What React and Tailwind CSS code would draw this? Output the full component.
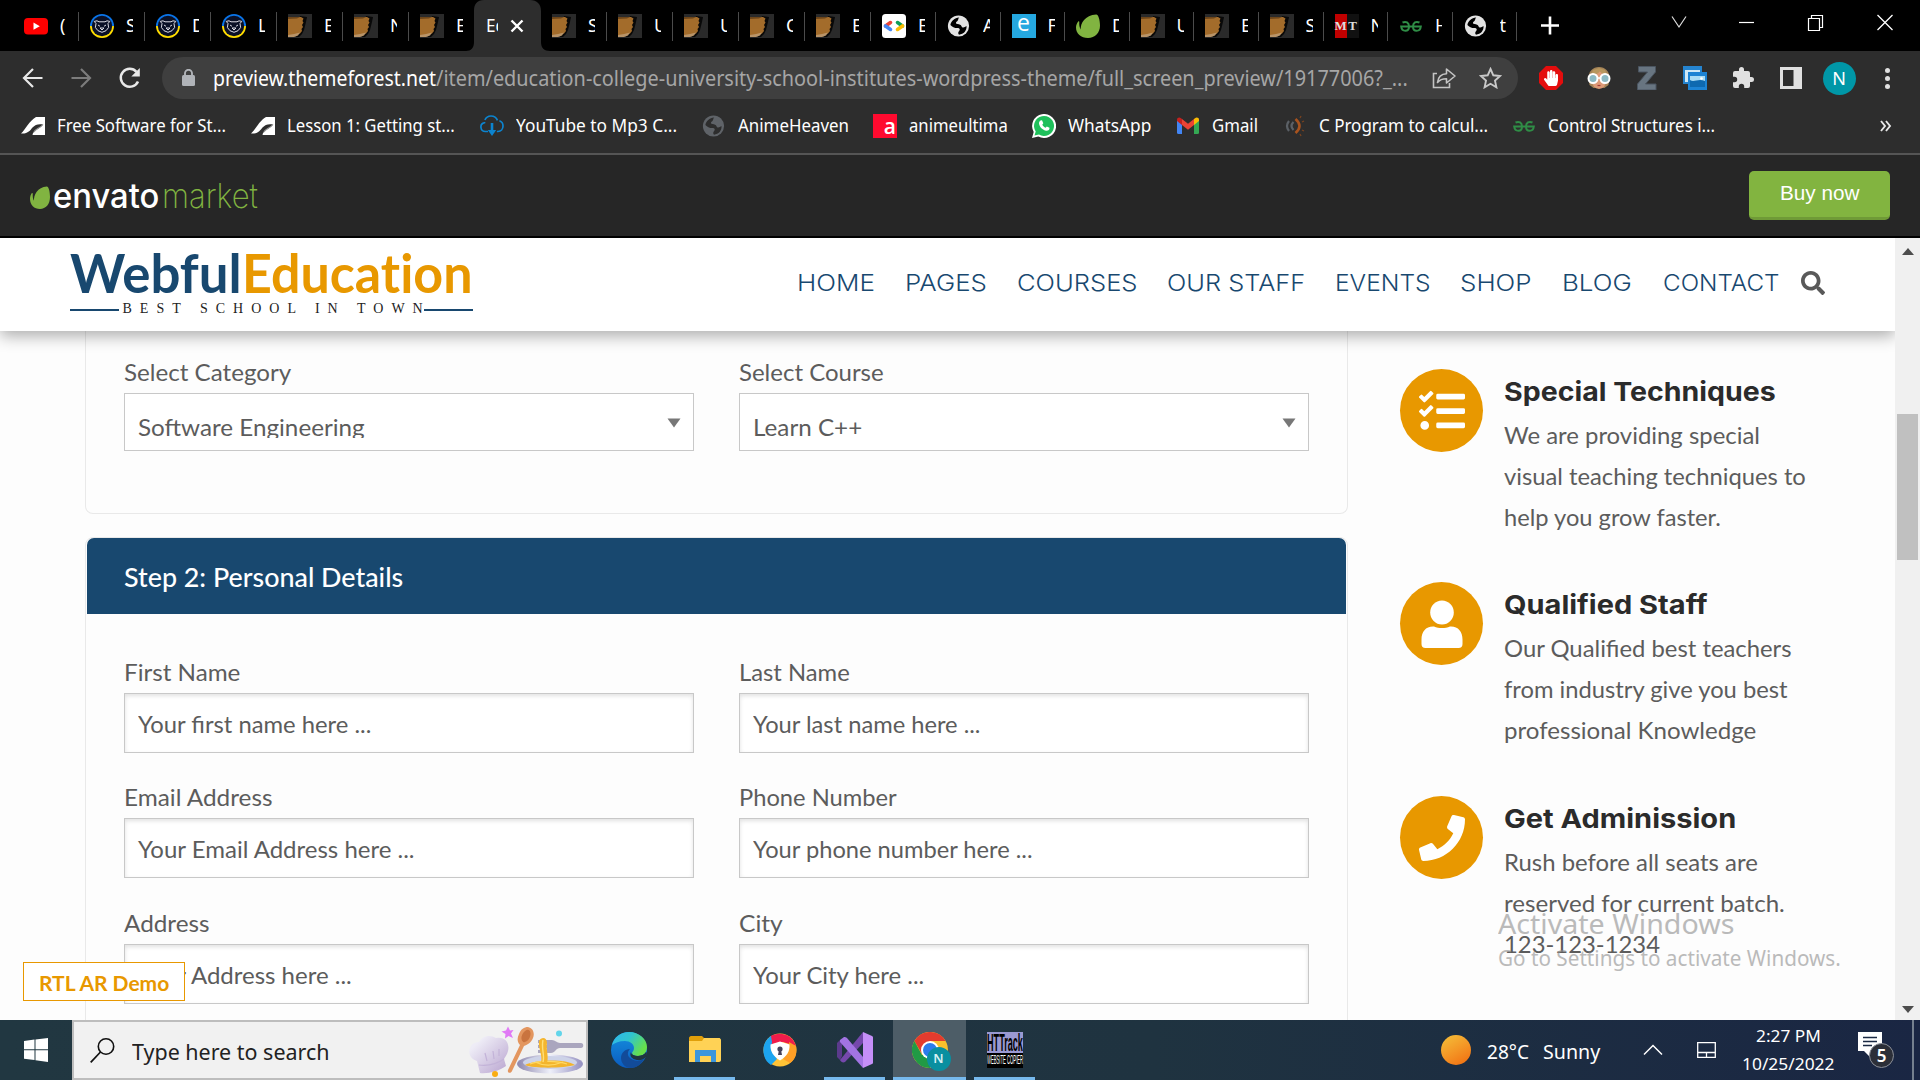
import React, { useLayoutEffect, useRef, useState } from "react";
import { FaSearch, FaTasks, FaPhone, FaHandPaper } from "react-icons/fa";

// Single line of text stretched horizontally to an exact width.
function Fit({ w, className = "", children }) {
  const ref = useRef(null);
  const [k, setK] = useState(1);
  useLayoutEffect(() => {
    setK(w / ref.current.offsetWidth);
  }, [w]);
  return (
    <span className={"inline-block shrink-0 whitespace-pre " + className} style={{ width: w }}>
      <span ref={ref} className="inline-block origin-left" style={{ transform: `scaleX(${k})` }}>
        {children}
      </span>
    </span>
  );
}

/* ---------- favicons ---------- */
const YouTube = () => (
  <svg width="24" height="24" viewBox="0 0 24 24"><rect y="4" width="24" height="16.5" rx="4" fill="#f00" /><path d="M9.5 8.6v7.2l6.3-3.6z" fill="#fff" /></svg>
);
const Bear = () => (
  <svg width="24" height="24" viewBox="0 0 24 24">
    <path d="M0 12a12 12 0 0 1 24 0z" fill="#0a74e8" /><path d="M0 12a12 12 0 0 0 24 0z" fill="#ffdd00" />
    <circle cx="12" cy="12" r="10.2" fill="#0a1026" />
    <path d="M6 9.5 4.2 7.4 7 6.8l2 1h6l2-1 2.8.6L18 9.5l.6 4-2.6 3.2-4 1.6-4-1.6-2.6-3.2z M8 11l2 1.3M16 11l-2 1.3M10 14h4l-2 2z" fill="none" stroke="#dcdce4" strokeWidth="1" />
  </svg>
);
const Fist = () => (
  <svg width="24" height="24" viewBox="0 0 24 24">
    <rect width="24" height="24" fill="#2a2a2a" />
    <path d="M12 2l7 1-1 5-1 4-1 4-2 4-3 3H8z" fill="#080808" />
    <path d="M0 3h13l2.500 1.500L14.500 7l1 1.500-1.500 2.500 1 2-1.500 2 .5 2-2 2.500-3 1-4 2H0z" fill="#a36c2b" />
    <path d="M0 21l6-1 6-1.500-2 3-4 1.500H0z" fill="#b99468" />
    <path d="M0 3h12l-3 1.500L0 5z" fill="#6d4519" />
  </svg>
);
const Dev = () => (
  <svg width="24" height="24" viewBox="0 0 24 24"><rect width="24" height="24" rx="3.5" fill="#fff" />
    <g fill="none" strokeWidth="3.6" strokeLinecap="round"><path d="M3.5 12 8.5 8.6" stroke="#ea4335" /><path d="M3.5 12l5 3.4" stroke="#4285f4" /><path d="M20.5 12l-5-3.4" stroke="#0f9d58" /><path d="M20.5 12l-5 3.4" stroke="#fbbc04" /></g>
  </svg>
);
const Globe = ({ fill = "#e3e3e3", hole = "#000" }) => (
  <svg width="24" height="24" viewBox="0 0 24 24"><circle cx="11.5" cy="12" r="10.6" fill={fill} />
    <path d="M12.200 3.600c-1.600 1.300-.4 2.500-2 3.600C8.400 8.300 8.600 9.800 10.500 10c2 .3 3.500.8 4 2.300.6 1.800 3 1.500 5-.2.500 4.500-2.800 8.300-7.500 8.600-1.300-1.300-.8-2.700.2-3.700 1.300-1.500.2-2.900-1.600-2.900-3.400 0-5.400-1.100-7.200-3.100C4 7.500 7.500 3.700 12.200 3.600z" fill={hole} />
  </svg>
);
const EIcon = () => (
  <span className="flex h-6 w-6 items-center justify-center bg-[#25a8e0] font-['Open_Sans'] text-[23px] leading-none text-white"><span className="-mt-1.5">e</span></span>
);
const Leaf = ({ w = 24, h = 24 }) => (
  <svg width={w} height={h} viewBox="0 0 24 24" preserveAspectRatio="none"><path d="M20.200.4C22 .2 24 5 24 11.500 24 19 19 24 12 24 5 24 0 19.500 0 13.500 0 11 1 9 2.200 7.400c.6-.5 1.200-.1 1.100.7-.2 2.700.1 5.400 1.500 7.300C4.200 9.500 9 1 20.200.4z" fill="#81b441" /></svg>
);
const MT = () => (
  <span className="flex h-6 w-6 bg-[#111] font-['Liberation_Serif'] text-[13px] leading-6 font-bold text-[#ddd]"><span className="w-3 bg-[#c00000] text-center">M</span><span className="w-3 text-center">T</span></span>
);
const Geeks = () => (
  <svg width="24" height="24" viewBox="0 0 24 24" fill="none" stroke="#2f8d46" strokeWidth="2">
    <path d="M3.500 8.500C7 7 10 8.500 10 12.500c0 3-1.500 4.300-3.600 4.300-2.200 0-3.900-1.300-4.200-4.300h19.600c-.3 3-2 4.300-4.200 4.300S14 15.500 14 12.500c0-4 3-5.500 6.500-4" />
  </svg>
);

const TABS = [
  [YouTube, "(", 66], [Bear, "S", 66], [Bear, "D", 66], [Bear, "L", 66], [Fist, "E", 66], [Fist, "N", 66], [Fist, "E", 66],
  null,
  [Fist, "S", 66], [Fist, "U", 66], [Fist, "U", 66], [Fist, "C", 66], [Fist, "E", 66], [Dev, "E", 65], [Globe, "A", 64.5],
  [EIcon, "F", 64.5], [Leaf, "D", 64.5], [Fist, "U", 64.5], [Fist, "E", 64.5], [Fist, "S", 65], [MT, "N", 64.5], [Geeks, "H", 64.5], [Globe, "t", 64.5],
];

function TabStrip() {
  return (
    <div className="flex h-[51px] bg-black pl-[13px] font-['Noto_Sans'] text-[18px] text-white">
      {TABS.map((t, i) => {
        if (!t)
          return (
            <div key={i} className="relative flex h-full w-[66px] items-center">
              <div className="absolute top-0 -left-[9px] h-full w-[84px]">
                <svg width="84" height="51" viewBox="0 0 84 51"><path d="M0 51c5 0 8-3 8-9V11C8 4 11 0 18 0h46c7 0 11 4 11 11v31c0 6 3 9 9 9z" fill="#2d2d2d" /></svg>
              </div>
              <span className="relative ml-[11px] w-3 overflow-hidden whitespace-nowrap"><Fit w={20}>Ed</Fit></span>
              <svg className="relative ml-3" width="14" height="14" viewBox="0 0 14 14"><path d="M1.500 1.500l11 11M12.500 1.500l-11 11" stroke="#fff" strokeWidth="2.400" /></svg>
            </div>
          );
        const [Icon, ch, w] = t;
        return (
          <div key={i} className="relative flex h-full shrink-0 items-center pl-[11px]" style={{ width: w }}>
            <Icon />
            <span className="ml-3 w-[7px] overflow-hidden whitespace-nowrap">{ch}</span>
            {i !== 6 && <span className="absolute top-3 right-0 h-[29px] w-px bg-[#4b4b4b]" />}
          </div>
        );
      })}
      <svg className="mt-4 ml-6 shrink-0" width="18" height="19" viewBox="0 0 18 19"><path d="M9 .5v18M0 9.500h18" stroke="#fff" strokeWidth="2.600" /></svg>
      <div className="ml-auto flex h-[43px] shrink-0 items-center">
        <svg width="68" height="20" viewBox="0 0 68 20"><path d="M8 4.500l7 10.500 7-10.500" fill="none" stroke="#ddd" strokeWidth="1.200" /></svg>
        <svg width="69" height="20" viewBox="0 0 69 20"><path d="M7 10.500h15" stroke="#fff" strokeWidth="1.200" /></svg>
        <svg width="69" height="20" viewBox="0 0 69 20"><path d="M7.500 6.500h11v12h-11zM10.500 6V3.500h11v12H19" fill="none" stroke="#fff" strokeWidth="1.200" /></svg>
        <svg width="50" height="20" viewBox="0 0 50 20"><path d="M7.500 3l15 15M22.500 3l-15 15" stroke="#fff" strokeWidth="1.300" /></svg>
      </div>
    </div>
  );
}

const Slot = ({ children }) => <div className="flex h-full w-12 shrink-0 items-center justify-center">{children}</div>;

function Toolbar() {
  return (
    <div className="flex h-[54px] items-center pl-[9px]">
      <Slot><svg width="22" height="22" viewBox="0 0 22 22"><path d="M20.500 11H2.500M11 2 2 11l9 9" fill="none" stroke="#e8e8e8" strokeWidth="2.200" /></svg></Slot>
      <Slot><svg width="22" height="22" viewBox="0 0 22 22"><path d="M1.500 11h18M11 2l9 9-9 9" fill="none" stroke="#7c7c7c" strokeWidth="2.200" /></svg></Slot>
      <Slot><svg className="ml-0.5" width="24" height="24" viewBox="0 0 24 24"><path d="M20 15.500A9 9 0 1 1 18.500 5.800" fill="none" stroke="#e8e8e8" strokeWidth="2.500" /><path d="M21.800 2v8.500h-8.500z" fill="#e8e8e8" /></svg></Slot>
      <div className="ml-[9px] flex h-[42px] w-[1356px] shrink-0 items-center rounded-full bg-[#3f3f3f] pl-[20px] font-['Noto_Sans'] text-[21px] leading-[42px]">
        <svg className="mr-[18px] mb-0.5" width="13" height="17" viewBox="0 0 13 17"><rect y="6" width="13" height="11" rx="1.5" fill="#b0b3b8" /><path d="M3 7V4.300a3.500 3.500 0 0 1 7 0V7" fill="none" stroke="#b0b3b8" strokeWidth="1.900" /></svg>
        <Fit w={223} className="text-white">preview.themeforest.net</Fit>
        <Fit w={972} className="text-[#a6a6a6]">/item/education-college-university-school-institutes-wordpress-theme/full_screen_preview/19177006?_...</Fit>
        <svg className="ml-6" width="25" height="22" viewBox="0 0 25 22"><path d="M5 6.500H1.500v14h16V16" fill="none" stroke="#c4c4c4" strokeWidth="1.600" /><path d="M5.500 15.500c.6-5.500 3.500-8.500 9-8.700V2l8.500 7-8.500 7v-4.300c-4 0-6.800 1-9 3.800z" fill="none" stroke="#c4c4c4" strokeWidth="1.600" strokeLinejoin="round" /></svg>
        <svg className="ml-[22px]" width="23" height="22" viewBox="0 0 23 22"><path d="M11.500 2l2.800 6.300 6.700.7-5 4.600 1.400 6.700-5.900-3.500-5.900 3.500L7 13.600 2 9l6.700-.7z" fill="none" stroke="#c9c9c9" strokeWidth="1.900" /></svg>
      </div>
      <div className="ml-[9px] flex h-full">
        <Slot><span className="relative flex h-6 w-6 items-center justify-center"><svg className="absolute inset-0" width="24" height="24" viewBox="0 0 24 24"><path d="M7 0h10l7 7v10l-7 7H7l-7-7V7z" fill="#e40d0d" /></svg><FaHandPaper className="relative" color="#fff" size={16} /></span></Slot>
        <Slot><svg width="24" height="24" viewBox="0 0 24 24"><path d="M1.500 12C1.500 5 6 1 12 1s10.500 4 10.500 11l-1 7-4 3h-11l-4-3z" fill="#a58458" /><ellipse cx="12" cy="14" rx="7.500" ry="9" fill="#dd9a78" /><path d="M4 9c4 0 7-1 9-4 2 3 4 4 7 4l-2-5-6-2-6 2z" fill="#b8975f" /><g fill="#8cb9c4" stroke="#fff" strokeWidth="2"><circle cx="6" cy="12.5" r="4.5" /><circle cx="18" cy="12.5" r="4.5" /></g><path d="M10.500 12h3" stroke="#fff" strokeWidth="1.500" /><path d="M10.500 19.500h3" stroke="#a43e3a" strokeWidth="1.200" /></svg></Slot>
        <Slot><svg width="20" height="24" viewBox="0 0 20 24"><path d="M1.500.5h17v5.500L8.500 18H19v6H.5v-6L10.500 6h-9z" fill="#687581" stroke="#4b5560" /></svg></Slot>
        <Slot><svg width="24" height="24" viewBox="0 0 24 24"><rect width="19" height="18" fill="#2584cf" /><path d="M2 4h15v12H2z" fill="#cfe8f6" /><rect x="5" y="6" width="19" height="18" fill="#1c83d4" /><path d="M7 10h15v11H7z" fill="#a9dcf5" /><path d="M7 14c4 3 8-2 15 1v6H7z" fill="#0e69b0" /><circle cx="18.5" cy="12.5" r="1.3" fill="#fff" /></svg></Slot>
        <Slot><svg width="24" height="24" viewBox="0 0 24 24"><path d="M20.500 11H19V7a2 2 0 0 0-2-2h-4V3.500a2.500 2.500 0 0 0-5 0V5H4a2 2 0 0 0-2 2v3.800h1.500a2.700 2.700 0 0 1 0 5.400H2V20a2 2 0 0 0 2 2h3.800v-1.500a2.700 2.700 0 0 1 5.400 0V22H17a2 2 0 0 0 2-2v-4h1.500a2.500 2.500 0 0 0 0-5z" fill="#e0e0e0" /></svg></Slot>
        <Slot><svg width="22" height="22" viewBox="0 0 22 22"><path d="M0 0h22v22H0zM3 3v16h10.500V3z" fill="#e0e0e0" fillRule="evenodd" /></svg></Slot>
        <Slot><span className="flex h-[33px] w-[33px] items-center justify-center rounded-full bg-[#0097a7] font-['Noto_Sans'] text-[18px] text-white">N</span></Slot>
        <Slot><span className="flex flex-col gap-[3px]"><i className="h-[5px] w-[5px] rounded-full bg-[#e0e0e0]" /><i className="h-[5px] w-[5px] rounded-full bg-[#e0e0e0]" /><i className="h-[5px] w-[5px] rounded-full bg-[#e0e0e0]" /></span></Slot>
      </div>
    </div>
  );
}

const Autodesk = () => (
  <svg width="24" height="24" viewBox="0 0 24 24"><path d="M0 19.500C5 15 8 7 15 3h9v18H11.500C12 16 19 15 22 10.500c-4-1-8 0-10.500 3C9 16.500 7 20 0 19.500z" fill="#fff" /><path d="M13 18c1-3 6-3.500 9-7.500" fill="none" stroke="#999" strokeWidth="1.200" /></svg>
);
const CloudDown = () => (
  <svg width="24" height="24" viewBox="0 0 24 24" fill="none" stroke="#0c84cf" strokeWidth="1.700"><path d="M8 17.500H5.500A4.500 4.500 0 0 1 4.500 8.600C4.500 4.500 7.500 2 11 2c3.200 0 5.500 1.700 6.500 4.500 3.500 0 5.500 2.500 5.500 5.500 0 3.200-2.200 5.500-5 5.500h-2" strokeDasharray="16 2" /><path d="M12 9v9" strokeWidth="2.600" /><path d="M7.800 16h8.400L12 22z" fill="#0c84cf" stroke="none" /></svg>
);
const AnimeU = () => <span className="flex h-6 w-6 items-end justify-end bg-[#ff0a2f] pr-px font-['Open_Sans'] text-[21px] leading-[24px] font-semibold text-white">a</span>;
const WhatsApp = () => (
  <span className="relative flex h-6 w-6 items-center justify-center">
    <svg className="absolute inset-0" width="24" height="24" viewBox="0 0 24 24"><path d="M0 24l1.700-6A12 12 0 1 1 6.300 22.500z" fill="#fff" /><path d="M2.500 21.500l1.200-4A10 10 0 1 1 7 20.600z" fill="#1fc05b" /></svg>
    <svg className="relative" width="14" height="14" viewBox="0 0 14 14"><path d="M3.500 1.500 5 1.300l1.300 3-1 1.400c.8 1.500 1.800 2.400 3.300 3l1.200-1.300 2.700 1.400c.2 2-1.300 3.200-3.200 3C5.500 11 2.500 8 2 4.500 2 3.200 2.600 2 3.500 1.500z" fill="#fff" /></svg>
  </span>
);
const Gmail = () => (
  <svg width="24" height="24" viewBox="0 0 24 24"><path d="M1 6v12.500A1.500 1.500 0 0 0 2.500 20H6V10z" fill="#4285f4" /><path d="M23 6v12.500a1.500 1.500 0 0 1-1.500 1.500H18V10z" fill="#34a853" /><path d="M18 5v6l5-4V6c0-2.500-2.500-3-4-1.800z" fill="#fbbc04" /><path d="M6 5l6 4.800L18 5v6l-6 4.700L6 11z" fill="#ea4335" /><path d="M6 5v6L1 7V6c0-2.500 2.500-3 4-1.800z" fill="#c5221f" /></svg>
);
const CProg = () => (
  <svg width="24" height="24" viewBox="0 0 24 24" fill="none"><path d="M6 7q-4 5 0 10M10.500 8q-4 4 0 8" stroke="#5b6066" strokeWidth="2.200" /><path d="M12.500 5q8 7 0 14" stroke="#a8531e" strokeWidth="2.600" /><path d="M17 4l1-2M19 8l2-1M19 16l2 1M17 20l1 2" stroke="#7a431f" strokeWidth="1.300" /></svg>
);
const DimGlobe = () => <Globe fill="#5f6368" hole="#2d2d2d" />;
const BOOKMARKS = [
  [Autodesk, "Free Software for St...", 169, 230], [Autodesk, "Lesson 1: Getting st...", 168, 229], [CloudDown, "YouTube to Mp3 C...", 161, 222],
  [DimGlobe, "AnimeHeaven", 111, 171], [AnimeU, "animeultima", 99, 159], [WhatsApp, "WhatsApp", 83, 144],
  [Gmail, "Gmail", 46, 107], [CProg, "C Program to calcul...", 169, 229], [Geeks, "Control Structures i...", 167, 368],
];

function BookmarkBar() {
  return (
    <div className="flex h-[50px] items-center border-b-2 border-[#555] pb-1.5 pl-[21px] font-['Noto_Sans'] text-[17.5px] text-white">
      {BOOKMARKS.map(([Icon, label, tw, w]) => (
        <div key={label} className="flex shrink-0 items-center gap-3" style={{ width: w }}>
          <Icon />
          <Fit w={tw} className="-mt-[2px]">{label}</Fit>
        </div>
      ))}
      <svg width="12" height="12" viewBox="0 0 12 12"><path d="M1 1l4 5-4 5M6 1l4 5-4 5" fill="none" stroke="#e8e8e8" strokeWidth="1.900" /></svg>
    </div>
  );
}

function EnvatoBar() {
  return (
    <div className="flex h-[83px] items-start justify-between border-b-2 border-black bg-[#262626] pr-[30px] pl-[30px]">
      <div className="mt-[21px] flex items-center font-['Inter'] text-[34px] leading-[40px]">
        <span className="mt-[3px]"><Leaf w={20} h={23} /></span>
        <Fit w={106} className="ml-[3px] font-medium text-white">envato</Fit>
        <Fit w={96} className="ml-[3px] font-extralight text-[#81b441]">market</Fit>
      </div>
      <button className="mt-4 flex h-[49px] w-[141px] items-center justify-center rounded-[5px] border-b-[3px] border-[#6f9a37] bg-[#82b440] font-['Liberation_Sans'] text-[21px] text-white">
        <Fit w={80} className="-mt-0.5">Buy now</Fit>
      </button>
    </div>
  );
}

const NAV = [["HOME", 78, 30], ["PAGES", 82, 30], ["COURSES", 120, 30], ["OUR STAFF", 138, 30], ["EVENTS", 95, 30], ["SHOP", 71, 31], ["BLOG", 70, 31], ["CONTACT", 117, 21]];

function SiteHeader() {
  return (
    <header className="relative z-10 flex h-[93px] w-[1895px] items-start bg-white pl-[70px] shadow-[0_5px_15px_rgba(0,0,0,0.32)]">
      <div className="mt-[7px] flex w-[403px] flex-col">
        <div className="flex h-[56px] font-['Lato'] text-[54px] leading-[56px] font-bold [font-variant-ligatures:none]">
          <Fit w={172} className="text-[#18486f]">Webful</Fit>
          <Fit w={231} className="text-[#e89800]">Education</Fit>
        </div>
        <div className="flex h-4 items-center justify-between font-['Liberation_Serif'] text-[14px] leading-4 text-[#222]">
          <span className="mt-px h-[2px] w-[49px] bg-[#18486f]" />
          <Fit w={308} className="ml-0.5 tracking-[8px]">BEST SCHOOL IN TOWN</Fit>
          <span className="mt-px -ml-2 h-[2px] w-[49px] bg-[#18486f]" />
        </div>
      </div>
      <nav className="mt-[29px] ml-[324px] flex items-center font-['Inter'] text-[23px] leading-8 font-light text-[#18486f]">
        {NAV.map(([t, w, g]) => (
          <a key={t} className="shrink-0" style={{ marginRight: g }}><Fit w={w}>{t}</Fit></a>
        ))}
        <FaSearch size={24} color="#595959" />
      </nav>
    </header>
  );
}

const FIELD = "flex w-[570px] border border-[#c8c8c8] bg-white pl-[13px]";
function Field({ label, w, ph, pw, className = "" }) {
  return (
    <div className={"flex flex-col " + className}>
      <Fit w={w} className="h-[42px] leading-[42px]">{label}</Fit>
      <div className={FIELD + " h-[60px] items-center pt-0.5 shadow-[inset_0_2px_4px_rgba(0,0,0,0.12)]"}><Fit w={pw} className="leading-[42px]">{ph}</Fit></div>
    </div>
  );
}
function Select({ label, w, value, vw }) {
  return (
    <div className="flex flex-col">
      <Fit w={w} className="h-[42px] leading-[41px]">{label}</Fit>
      <div className={FIELD + " h-[58px] justify-between pr-[12px]"}>
        <span className="mt-[14px] h-[30px] overflow-hidden"><Fit w={vw} className="leading-[37px]">{value}</Fit></span>
        <svg className="mt-6" width="14" height="10" viewBox="0 0 14 10"><path d="M.5.5h13L7 9.500z" fill="#777" /></svg>
      </div>
    </div>
  );
}

function EnrollForm() {
  return (
    <div className="ml-[85px] w-[1263px] shrink-0 text-[#5c5c5c]">
      <section className="h-[183px] rounded-b-lg border border-t-0 border-[#e9e9e9] pt-[20px] pl-[38px]">
        <div className="flex gap-[45px]">
          <Select label="Select Category" w={167} value="Software Engineering" vw={227} />
          <Select label="Select Course" w={145} value="Learn C++" vw={109} />
        </div>
      </section>
      <section className="mt-[23px] h-[600px] rounded-t-lg border border-[#e9e9e9]">
        <h2 className="mx-px flex h-[76px] items-center rounded-t-[7px] bg-[#18486f] pt-0.5 pl-[37px] text-[26px] font-medium text-white"><Fit w={279}>Step 2: Personal Details</Fit></h2>
        <div className="grid grid-cols-[570px_570px] gap-x-[45px] pt-[37px] pl-[38px]">
          <Field label="First Name" w={116} ph="Your first name here ..." pw={233} />
          <Field label="Last Name" w={111} ph="Your last name here ..." pw={227} />
          <Field className="mt-[23px]" label="Email Address" w={149} ph="Your Email Address here ..." pw={277} />
          <Field className="mt-[23px]" label="Phone Number" w={158} ph="Your phone number here ..." pw={280} />
          <Field className="mt-6" label="Address" w={86} ph="Your Address here ..." pw={214} />
          <Field className="mt-6" label="City" w={44} ph="Your City here ..." pw={171} />
        </div>
      </section>
    </div>
  );
}

const Person = () => (
  <svg width="42" height="48" viewBox="0 0 42 48" fill="#fff"><ellipse cx="21" cy="12.5" rx="11.8" ry="12" /><path d="M13 26.500c5 2 11 2 16 0 8-.5 12.500 5 12.500 13V44a4 4 0 0 1-4 4h-33a4 4 0 0 1-4-4v-4.500c0-8 4.500-13.500 12.500-13z" /></svg>
);
const INFO = [
  [<FaTasks size={46} />, "Special Techniques", 272, 213, [["We are providing special", 256], ["visual teaching techniques to", 302], ["help you grow faster.", 217]]],
  [<Person />, "Qualified Staff", 204, 214, [["Our Qualified best teachers", 288], ["from industry give you best", 284], ["professional Knowledge", 252]]],
  [<FaPhone size={46} />, "Get Adminission", 232, 213, [["Rush before all seats are", 254], ["reserved for current batch.", 281], ["123-123-1234", 156]]],
];

function InfoList() {
  return (
    <aside className="ml-[52px] flex flex-col pt-[38px]">
      {INFO.map(([icon, title, tw, h, lines]) => (
        <div key={title} className="flex gap-[21px]" style={{ height: h }}>
          <span className="flex h-[83px] w-[83px] shrink-0 items-center justify-center rounded-full bg-[#e89800] text-white">{icon}</span>
          <div className="flex flex-col text-[#5c5c5c]">
            <Fit w={tw} className="mt-1 mb-1 h-[37px] font-['Inter'] text-[26px] leading-[37px] font-bold text-[#2b2b2b]">{title}</Fit>
            {lines.map(([t, w]) => <Fit key={t} w={w} className="h-[41px] leading-[41px]">{t}</Fit>)}
          </div>
        </div>
      ))}
    </aside>
  );
}

/* ---------- taskbar ---------- */
const Cooking = () => (
  <svg width="118" height="54" viewBox="0 0 118 54">
    <defs>
      <linearGradient id="hat" x1="0" y1="0" x2="1" y2="1"><stop offset=".2" stopColor="#eeecf6" /><stop offset="1" stopColor="#b8a3cf" /></linearGradient>
      <linearGradient id="plate" x1="0" y1="0" x2="1" y2="0"><stop offset="0" stopColor="#8c86ad" /><stop offset=".5" stopColor="#eef0fa" /><stop offset="1" stopColor="#938fc0" /></linearGradient>
    </defs>
    <path d="M9 37C2 35-1 28 3 22c2-3 5-4 8-4 3-6 11-8 17-4 9-2 14 5 12 13-1 4-3 6-4 8l2 7c-7 5-18 8-26 7z" fill="url(#hat)" />
    <path d="M11 41c9 1 18-1 25-6M17 29l2 8M25 27l1 8M31 25l0 7" fill="none" stroke="#c3b3d8" strokeWidth="1.200" />
    <path d="M40 2.500l2 4 3.500-.5-2.500 3.500 2 4.500-4.500-2-3.500 2.500.5-4.500-4-2.500 4.500-1z" fill="#e079f5" />
    <path d="M60 3c5 1 7 6 5 11-2 5-6 7-9 8L44 47c-1 3-5 2-4-1l12-25c-3-3-3-7-1-11 2-5 5-7 9-7z" fill="#e3965f" />
    <ellipse cx="58" cy="12" rx="4" ry="6.5" transform="rotate(25 58 12)" fill="#c9743f" />
    <ellipse cx="82" cy="40" rx="33" ry="9.5" fill="url(#plate)" /><ellipse cx="82" cy="38.5" rx="27" ry="6.5" fill="#cdd3e8" />
    <path d="M57 41c8-5 40-7 50 0-10 3-40 4-50 0z" fill="#f3b42c" />
    <path d="M62 40c9-4 28-3 37 0M67 38c8 4 18 4 28 0" fill="none" stroke="#ffd862" strokeWidth="1.300" />
    <path d="M70 16h14c3 0 5 3 8 3h21c3 0 3 5 0 5H92c-4 0-5 5-9 5H70v-3h9v-2H70v-3h9v-2h-9z" fill="#aaa6be" />
    <path d="M71 17c3-5 8-3 8 2-1 8 2 13 0 20h-6c2-8-3-14-2-22z" fill="#f5b62e" /><path d="M75 16c-2 9 2 15 0 22" fill="none" stroke="#ffe07a" strokeWidth="1.400" />
    <circle cx="91" cy="9.5" r="3" fill="#62d5ea" /><circle cx="27" cy="50" r="3" fill="#f9ad12" />
  </svg>
);
const Edge = () => (
  <svg width="36" height="36" viewBox="0 0 36 36">
    <defs>
      <linearGradient id="e1" x1="0" y1="0" x2="1" y2=".5"><stop offset="0" stopColor="#2fb5ee" /><stop offset=".5" stopColor="#30c4cf" /><stop offset="1" stopColor="#67e04a" /></linearGradient>
      <linearGradient id="e2" x1="0" y1="0" x2="0" y2="1"><stop offset="0" stopColor="#1590df" /><stop offset="1" stopColor="#0b5cc0" /></linearGradient>
    </defs>
    <circle cx="18" cy="18" r="18" fill="url(#e2)" />
    <path d="M1 13C3 5 10 0 18 0c10 0 18 7 18 15 0 6-4 9-9 9-4 0-6-1-6-3 0-1 2-2 2-5 0-4-4-7-9-7-6 0-10 2-13 4z" fill="url(#e1)" />
    <path d="M33 27c-5 3-12 2-15-2-2-3-1-6 1-8-5 0-9 4-9 9 0 5 4 10 10 10 5 0 10-3 13-9z" fill="#124b99" />
    <path d="M35 25c-3 3-6 3.500-9 3-5-1-8-4-6-8 0 2 2 4 7 4 3 0 6-1 9-4z" fill="#203640" />
    <path d="M35 20c-2 3-5 4-8 4-4 0-6-1-6-3 0 5 8 7 15 3z" fill="#203640" />
  </svg>
);
const Explorer = () => (
  <svg width="32" height="27" viewBox="0 0 32 27"><path d="M0 2c0-1 1-2 2-2h11l2 2h16v6H0z" fill="#e09f0a" /><path d="M0 5h13l2-3h15c1 0 2 1 2 2v20c0 1-1 2-2 2H0z" fill="#ffd255" /><path d="M6 14h21v12h-5v-6H11v6H6z" fill="#3c96dc" /></svg>
);
const SecureBrowser = () => (
  <svg width="34" height="34" viewBox="0 0 34 34">
    <circle cx="17" cy="17" r="16.5" fill="#ffc336" /><path d="M8 3C14-1 29-1 33 13L20 9 5 12z" fill="#f01c4b" /><path d="M8 3C2 7-1 14 1 22c1 5 4 8 7 10l6-6-6-9 1-8z" fill="#1ca4ef" /><path d="M33 13c1 7 0 13-6 17l-7-4 6-8V9z" fill="#ff9f26" />
    <path d="M17 8.500l9.500 3c.5 7-3 12-9.500 16-6.500-4-10-9-9.500-16z" fill="#fff" /><circle cx="17" cy="16" r="2.6" fill="#45425a" /><path d="M16 17h2l1 5h-4z" fill="#45425a" />
  </svg>
);
const VisualStudio = () => (
  <svg width="36" height="36" viewBox="0 0 36 36"><path d="M0 11l3-3 2 4v12l-2 4-3-3z" fill="#5b3a8c" /><path d="M3 28 26 0v11L8 30c-2 1-4 0-5-2z" fill="#7548ac" /><path d="M3 8l4-3c1 0 2 0 3 1l16 19v11L3 10z" fill="#a274e3" /><path d="M26 0l9 4c.7.300 1 1 1 1.500v25c0 1-.3 1.300-1 1.500l-9 4z" fill="#c58ff8" /></svg>
);
const ChromeIcon = () => (
  <span className="relative h-9 w-9">
    <svg width="36" height="36" viewBox="0 0 36 36"><circle cx="18" cy="18" r="18" fill="#fbc02d" /><path d="M2.400 9A18 18 0 0 1 33.600 9H18L10 22z" fill="#e33b2e" /><path d="M2.400 9A18 18 0 0 0 18 36l8-13H10z" fill="#219a45" /><circle cx="18" cy="18" r="9" fill="#fff" /><circle cx="18" cy="18" r="7" fill="#2c7ceb" /></svg>
    <span className="absolute top-[15px] left-[15px] flex h-6 w-6 items-center justify-center rounded-full bg-[#0a8fa0] font-['Noto_Sans'] text-[13px] leading-none font-semibold text-[#d8f1f4]">N</span>
  </span>
);
const HTTrack = () => (
  <span className="flex h-9 w-9 flex-col bg-black font-['Liberation_Sans'] leading-none">
    <span className="h-[21px] overflow-hidden bg-[#9a99d2]"><Fit w={36} className="text-[23px] leading-[22px] font-bold text-black">HTTrack</Fit></span>
    <Fit w={36} className="text-[12px] leading-[15px] text-white">WEBSITE COPIER</Fit>
  </span>
);
const APPS = [
  [Edge, 54, 0, false], [Explorer, 61, 18, true], [SecureBrowser, 61, 14, false], [VisualStudio, 61, 14, true], [ChromeIcon, 73, 8, true], [HTTrack, 61, 8, true],
];

function Taskbar() {
  return (
    <footer className="flex h-[60px] w-[1920px] bg-linear-to-r from-[#213741] via-[#1f3340] via-60% to-[#1a2643] font-['Noto_Sans'] text-white">
      <div className="flex w-[72px] shrink-0 items-center justify-center">
        <svg width="24" height="24" viewBox="0 0 24 24" fill="#fff"><path d="M0 3l10.500-1.500v9.800H0zM11.500 1.400 24 0v11.300H11.500zM0 12.300h10.500V22L0 20.700zM11.500 12.300H24V24l-12.500-1.700z" /></svg>
      </div>
      <div className="flex w-[516px] shrink-0 items-center border-2 border-[#bdbdbd] bg-[#f1f1f1] pl-4">
        <svg width="25" height="25" viewBox="0 0 25 25"><circle cx="16" cy="8.5" r="7.7" fill="none" stroke="#111" strokeWidth="1.600" /><path d="M10.500 14 .7 24.300" stroke="#111" strokeWidth="1.700" /></svg>
        <Fit w={198} className="mt-0.5 ml-[17px] text-[22px] text-[#222]">Type here to search</Fit>
        <div className="mt-px ml-auto"><Cooking /></div>
      </div>
      <div className="flex pl-[14px]">
        {APPS.map(([Icon, w, ml, on], i) => (
          <div key={i} className={"flex flex-col " + (i === 4 ? "bg-[#4d5d67]" : "")} style={{ width: w, marginLeft: ml }}>
            <div className="flex h-[57px] items-center justify-center pt-0.5"><Icon /></div>
            <div className={"h-[3px] " + (on ? "bg-[#76b9ed]" : "")} />
          </div>
        ))}
      </div>
      <div className="ml-auto flex items-center">
        <span className="h-[30px] w-[30px] rounded-full bg-linear-150 from-[#f3c13a] to-[#f0690c]" />
        <Fit w={42} className="mt-1 ml-4 text-[20px]">28°C</Fit>
        <Fit w={57} className="mt-1 ml-[14px] text-[20px]">Sunny</Fit>
        <svg className="ml-[43px]" width="20" height="12" viewBox="0 0 20 12"><path d="M1 10.500l9-9 9 9" fill="none" stroke="#fff" strokeWidth="1.500" /></svg>
        <svg className="ml-[34px]" width="19" height="16" viewBox="0 0 19 16"><path d="M.7.700h17.600v14.600H.7zM.7 10.500h17.600M9.500 10.500v5" fill="none" stroke="#fff" strokeWidth="1.300" /></svg>
        <div className="ml-[26px] flex w-[92px] flex-col items-center text-[17px] leading-[28px]">
          <Fit w={65}>2:27 PM</Fit>
          <Fit w={92}>10/25/2022</Fit>
        </div>
        <div className="relative ml-6 h-9 w-9">
          <svg width="24" height="26" viewBox="0 0 24 26"><path d="M0 0h24v19H13l-1 6-6-6H0z" fill="#fff" /><path d="M5 5.500h14M5 9.500h14M5 13.500h9" stroke="#1b2a44" strokeWidth="1.300" /></svg>
          <span className="absolute top-[11px] left-[11px] flex h-[25px] w-[25px] items-center justify-center rounded-full border border-[#8b8f98] bg-[#2c2f38] text-[17px] leading-none font-semibold">5</span>
        </div>
        <span className="ml-[18px] h-[60px] w-[2px] bg-[#75808e]" />
        <span className="w-[6px]" />
      </div>
    </footer>
  );
}

export default function App() {
  return (
    <div className="flex h-[1080px] w-[1920px] flex-col overflow-hidden bg-[#fdfdfd]">
      <div className="h-[155px] shrink-0 bg-[#2d2d2d]">
        <TabStrip />
        <Toolbar />
        <BookmarkBar />
      </div>
      <EnvatoBar />
      <div className="relative flex h-[782px] shrink-0 overflow-hidden">
        <div className="w-[1895px] overflow-hidden">
          <SiteHeader />
          <main className="flex h-[689px] items-start font-['Lato'] text-[24px]">
            <EnrollForm />
            <InfoList />
          </main>
        </div>
        <div className="flex w-[25px] flex-col items-center bg-[#f0f0f0]">
          <svg className="mt-[10px]" width="12" height="7" viewBox="0 0 12 7"><path d="M0 7l6-7 6 7z" fill="#4d4d4d" /></svg>
          <span className="mt-[159px] h-[146px] w-[21px] bg-[#c0c0c0]" />
          <svg className="mt-auto mb-[7px]" width="12" height="7" viewBox="0 0 12 7"><path d="M0 0l6 7 6-7z" fill="#4d4d4d" /></svg>
        </div>
        <a className="absolute top-[724px] left-[23px] flex h-[39px] w-[162px] items-center border border-[#e89800] bg-white pt-0.5 pl-[15px] font-['Lato'] text-[21px] font-bold text-[#e89800]"><Fit w={130}>RTL AR Demo</Fit></a>
        <div className="absolute top-[664px] left-[1498px] flex flex-col font-['Noto_Sans'] text-[#8f8f8f] opacity-60">
          <Fit w={236} className="h-[41px] text-[28px] leading-[42px]">Activate Windows</Fit>
          <Fit w={343} className="h-[30px] text-[21px] leading-[30px]">Go to Settings to activate Windows.</Fit>
        </div>
      </div>
      <Taskbar />
    </div>
  );
}
